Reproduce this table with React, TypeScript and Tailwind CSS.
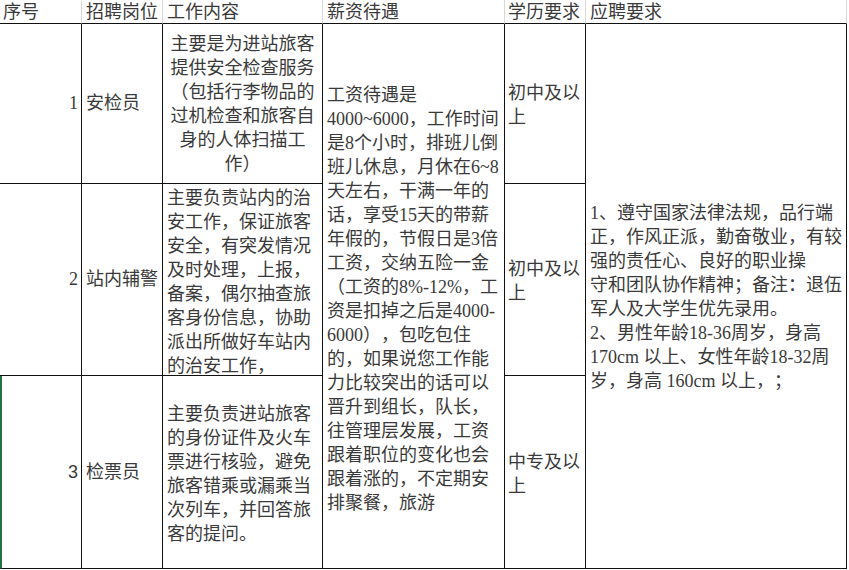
import React from "react";

const FONT = { fontFamily: '"Liberation Serif", "Noto Sans CJK SC", serif' };

const Lines = ({ lines, center = false }: { lines: string[]; center?: boolean }) => (
  <div className={center ? "text-center" : "text-left"}>
    {lines.map((l, i) => (
      <div key={i} className="whitespace-nowrap h-[24px] leading-[24px]">
        {l}
      </div>
    ))}
  </div>
);

const cell = "border-r border-b border-[#111] flex items-center overflow-hidden";

export default function App() {
  const headers = ["序号", "招聘岗位", "工作内容", "薪资待遇", "学历要求", "应聘要求"];
  const pad = ["pl-[3px]", "pl-[4px]", "pl-[4px]", "pl-[4px]", "pl-[3px]", "pl-[4px]"];
  return (
    <div
      className="w-[849px] h-[570px] bg-white text-[#3a3a3a] text-[18px] [text-spacing-trim:space-all]"
      style={FONT}
    >
      <div className="grid grid-cols-[82px_81px_160px_182px_81px_261px] grid-rows-[24px_160px_192px_193px] w-[847px]">
        {headers.map((h, i) => (
          <div
            key={h}
            className={`border-r border-[#d8d8d8] border-b border-b-[#111] flex items-center leading-[24px] whitespace-nowrap ${pad[i]}`}
          >
            {h}
          </div>
        ))}

        {/* merged salary column */}
        <div className={`${cell} col-start-4 row-start-2 row-span-3 pl-[4px] pt-[6px]`}>
          <Lines
            lines={[
              "工资待遇是",
              "4000~6000，工作时间",
              "是8个小时，排班儿倒",
              "班儿休息，月休在6~8",
              "天左右，干满一年的",
              "话，享受15天的带薪",
              "年假的，节假日是3倍",
              "工资，交纳五险一金",
              "（工资的8%-12%，工",
              "资是扣掉之后是4000-",
              "6000），包吃包住",
              "的，如果说您工作能",
              "力比较突出的话可以",
              "晋升到组长，队长，",
              "往管理层发展，工资",
              "跟着职位的变化也会",
              "跟着涨的，不定期安",
              "排聚餐，旅游",
            ]}
          />
        </div>

        {/* merged requirements column */}
        <div className={`${cell} col-start-6 row-start-2 row-span-3 pl-[4px] pt-[2px]`}>
          <Lines
            lines={[
              "1、遵守国家法律法规，品行端",
              "正，作风正派，勤奋敬业，有较",
              "强的责任心、良好的职业操",
              "守和团队协作精神；备注：退伍",
              "军人及大学生优先录用。",
              "2、男性年龄18-36周岁，身高",
              "170cm 以上、女性年龄18-32周",
              "岁，身高 160cm 以上，；",
            ]}
          />
        </div>

        {/* row 1 */}
        <div className={`${cell} justify-end pr-[3px]`}>1</div>
        <div className={`${cell} pl-[4px] whitespace-nowrap`}>安检员</div>
        <div className={`${cell} justify-center`}>
          <Lines
            center
            lines={[
              "主要是为进站旅客",
              "提供安全检查服务",
              "（包括行李物品的",
              "过机检查和旅客自",
              "身的人体扫描工",
              "作）",
            ]}
          />
        </div>
        <div className={`${cell} pl-[3px] pt-[3px]`}>
          <Lines lines={["初中及以", "上"]} />
        </div>

        {/* row 2 */}
        <div className={`${cell} justify-end pr-[3px]`}>2</div>
        <div className={`${cell} pl-[4px] whitespace-nowrap`}>站内辅警</div>
        <div className={`${cell} pl-[4px] pt-[4px]`}>
          <Lines
            lines={[
              "主要负责站内的治",
              "安工作，保证旅客",
              "安全，有突发情况",
              "及时处理，上报，",
              "备案，偶尔抽查旅",
              "客身份信息，协助",
              "派出所做好车站内",
              "的治安工作，",
            ]}
          />
        </div>
        <div className={`${cell} pl-[3px] pt-[3px]`}>
          <Lines lines={["初中及以", "上"]} />
        </div>

        {/* row 3 */}
        <div className={`${cell} justify-end pr-[3px] border-l-2 border-l-[#217346]`}>
          <span style={{ fontFamily: '"Liberation Sans", sans-serif' }}>3</span>
        </div>
        <div className={`${cell} pl-[4px] whitespace-nowrap`}>检票员</div>
        <div className={`${cell} pl-[4px] pt-[4px]`}>
          <Lines
            lines={[
              "主要负责进站旅客",
              "的身份证件及火车",
              "票进行核验，避免",
              "旅客错乘或漏乘当",
              "次列车，并回答旅",
              "客的提问。",
            ]}
          />
        </div>
        <div className={`${cell} pl-[3px] pt-[3px]`}>
          <Lines lines={["中专及以", "上"]} />
        </div>
      </div>
    </div>
  );
}
